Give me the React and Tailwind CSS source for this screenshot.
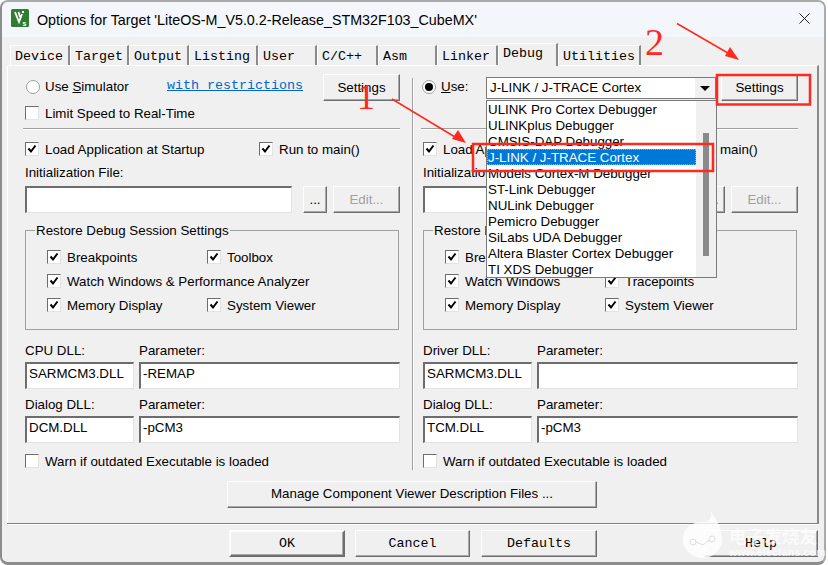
import React from 'react';

const FONT = "font-['Liberation_Sans',Arial,sans-serif]";
const MONO = "font-['Liberation_Mono','Courier_New',monospace]";

const Check = ({ checked, label, className = '' }) => (
  <div className={`flex items-center gap-[6px] h-[16px] ${className}`}>
    <span className="w-[14px] h-[14px] shrink-0 bg-white border-t border-l border-t-[#6d6d6d] border-l-[#6d6d6d] border-r border-b border-r-[#e3e3e3] border-b-[#e3e3e3] flex items-center justify-center">
      {checked && (
        <svg width="10" height="10" viewBox="0 0 10 10">
          <path d="M1.5 4.5 L4 7.5 L8.5 1.5" fill="none" stroke="#000" strokeWidth="2" />
        </svg>
      )}
    </span>
    <span className="whitespace-nowrap pt-[2px]">{label}</span>
  </div>
);

const Radio = ({ selected, children }) => (
  <div className="flex items-center gap-[5px]">
    <span className="w-[14px] h-[14px] rounded-full bg-white border border-[#a0a0a0] flex items-center justify-center">
      {selected && <span className="w-[8px] h-[8px] rounded-full bg-black" />}
    </span>
    <span className="whitespace-nowrap">{children}</span>
  </div>
);

const Btn = ({ className = '', children, disabled }) => (
  <div className={`flex items-center justify-center bg-[#f0f0f0] border border-t-[#fdfdfd] border-l-[#fdfdfd] border-r-[#6e6e6e] border-b-[#6e6e6e] shadow-[inset_-1px_-1px_0_#a8a8a8] ${disabled ? 'text-[#a0a0a0]' : ''} ${className}`}>
    {children}
  </div>
);

const Field = ({ className = '', children }) => (
  <div className={`h-[27px] bg-white border-t-2 border-l-2 border-t-[#6d6d6d] border-l-[#6d6d6d] border-r border-b border-r-[#e3e3e3] border-b-[#e3e3e3] pl-[2px] leading-[20px] whitespace-nowrap ${className}`}>
    {children}
  </div>
);

const Panel = ({ top, limit, restoreRows, dll1Label, dll1, param1, dll2, param2 }) => (
  <div className="w-[375px] flex flex-col">
    <div className="h-[31px]">{top}</div>
    <div className="h-[16px] flex items-center">{limit}</div>
    <div className="mt-[7px] -ml-[2px] w-[377px] h-[2px] border-t border-t-[#a0a0a0] border-b border-b-white" />
    <div className="mt-[11px] flex h-[16px]">
      <Check checked label="Load Application at Startup" className="w-[234px]" />
      <Check checked label="Run to main()" />
    </div>
    <div className="mt-[7px] h-[16px] leading-[18px]">Initialization File:</div>
    <div className="mt-[6px] flex">
      <Field className="w-[267px]" />
      <Btn className="w-[24px] h-[27px] ml-[11px]">...</Btn>
      <Btn disabled className="w-[67px] h-[27px] ml-[6px]">Edit...</Btn>
    </div>
    <div className="mt-[17px] h-[100px] w-[374px] border border-[#a0a0a0] relative pt-[18px] pl-[21px] flex flex-col gap-[8px]">
      <span className="absolute -top-[9px] left-[9px] px-[1px] bg-[#f0f0f0] h-[16px] leading-[18px]">Restore Debug Session Settings</span>
      {restoreRows.map((row, i) => (
        <div key={i} className="flex">
          {row.map((item, j) => (
            <Check key={j} checked label={item} className={row.length > 1 && j === 0 ? 'w-[160px]' : ''} />
          ))}
        </div>
      ))}
    </div>
    <div className="mt-[12px] flex gap-[5px] h-[16px] leading-[18px]">
      <span className="w-[109px]">{dll1Label}</span>
      <span>Parameter:</span>
    </div>
    <div className="mt-[4px] flex gap-[5px]">
      <Field className="w-[109px]">{dll1}</Field>
      <Field className="w-[261px]">{param1}</Field>
    </div>
    <div className="mt-[7px] flex gap-[5px] h-[16px] leading-[18px]">
      <span className="w-[109px]">Dialog DLL:</span>
      <span>Parameter:</span>
    </div>
    <div className="mt-[4px] flex gap-[5px]">
      <Field className="w-[109px]">{dll2}</Field>
      <Field className="w-[261px]">{param2}</Field>
    </div>
    <Check label="Warn if outdated Executable is loaded" className="mt-[10px]" />
  </div>
);

const tabs = [
  ['Device', 'w-[60px]'], ['Target', 'w-[59px]'], ['Output', 'w-[60px]'], ['Listing', 'w-[69px]'],
  ['User', 'w-[59px]'], ['C/C++', 'w-[61px]'], ['Asm', 'w-[59px]'], ['Linker', 'w-[61px]'],
];

const debuggers = [
  'ULINK Pro Cortex Debugger', 'ULINKplus Debugger', 'CMSIS-DAP Debugger', 'J-LINK / J-TRACE Cortex',
  'Models Cortex-M Debugger', 'ST-Link Debugger', 'NULink Debugger', 'Pemicro Debugger',
  'SiLabs UDA Debugger', 'Altera Blaster Cortex Debugger', 'TI XDS Debugger',
];

const Tab = ({ label, className = '', active }) => (
  <div className={`${active ? 'h-[23px] -mb-[1px] bg-[#f0f0f0] relative z-10 border-t border-t-white leading-[20px]' : 'h-[20px] border-t border-t-[#fbfbfb] leading-[22px]'} border-l border-l-white border-r-2 border-r-[#8a8a8a] pl-[4px] ${MONO} text-[13.33px] ${className}`}>
    {label}
  </div>
);

export default function App() {
  return (
    <div className={`${FONT} relative w-[828px] h-[565px] overflow-hidden bg-white text-[13.33px] text-black leading-[18px]`}>
      <div className="w-[826px] h-[565px] rounded-[8px] border-2 border-b-[3px] border-[#8d8d8d] border-t-[#aaa] border-r-[#aaa] bg-[#f0f0f0] overflow-hidden flex flex-col">
        {/* title bar */}
        <div className="h-[35px] shrink-0 bg-[#f3f6fa] flex items-center pl-[9px] pr-[14px]">
          <svg className="-mt-[3px]" width="18" height="18" viewBox="0 0 18 18">
            <rect width="18" height="18" rx="1.5" fill="#2e7d32" />
            <path d="M4 3 L8 13 L11 5 M7.5 3 L9 8 M11 3 L13 3" fill="none" stroke="#fff" strokeWidth="1.8" />
            <text x="11.5" y="16.5" fill="#fff" fontSize="7" fontWeight="bold">s</text>
          </svg>
          <span className="ml-[8px] text-[14.3px]">Options for Target 'LiteOS-M_V5.0.2-Release_STM32F103_CubeMX'</span>
          <svg className="ml-auto -mt-[3px]" width="11" height="11" viewBox="0 0 11 11">
            <path d="M0.5 0.5 L10.5 10.5 M10.5 0.5 L0.5 10.5" stroke="#222" strokeWidth="1" />
          </svg>
        </div>

        {/* tabs */}
        <div className="h-[28px] shrink-0 flex items-end pl-[8px]">
          {tabs.map(([label, w]) => <Tab key={label} label={label} className={w} />)}
          <Tab active label="Debug" className="w-[60px]" />
          <Tab label="Utilities" className="w-[83px]" />
        </div>

        {/* sheet */}
        <div className="flex-1 mx-[5px] border-l border-l-white border-t border-t-white border-r-2 border-r-[#8a8a8a] flex flex-col pl-[17px] pt-[8px]">
          <div className="flex">
            <Panel
              top={
                <div className="flex items-start pl-[1px]">
                  <div className="w-[141px] pt-[4px]"><Radio>Use <u>S</u>imulator</Radio></div>
                  <a className={`${MONO} text-[13.33px] text-[#0066cc] underline pt-[3px] w-[156px]`}>with restrictions</a>
                  <Btn className="w-[77px] h-[27px]">Settings</Btn>
                </div>
              }
              limit={<Check label="Limit Speed to Real-Time" />}
              restoreRows={[['Breakpoints', 'Toolbox'], ['Watch Windows & Performance Analyzer'], ['Memory Display', 'System Viewer']]}
              dll1Label="CPU DLL:"
              dll1="SARMCM3.DLL"
              param1="-REMAP"
              dll2="DCM.DLL"
              param2="-pCM3"
            />
            <div className="ml-[12px] mr-[9px] mt-[4px] w-[2px] h-[392px] border-l border-l-[#a0a0a0] border-r border-r-white" />
            <Panel
              top={
                <div className="flex items-start -ml-[1px]">
                  <div className="w-[64px] pt-[4px]"><Radio selected><u>U</u>se:</Radio></div>
                  <div className="w-[230px] h-[22px] mt-[3px] bg-white border border-[#7a7a7a] flex items-center pl-[3px]">
                    J-LINK / J-TRACE Cortex
                    <span className="ml-auto w-[21px] h-full bg-[#f0f0f0] border-l border-l-white flex items-center justify-center">
                      <span className="w-0 h-0 border-x-[5px] border-x-transparent border-t-[5px] border-t-black" />
                    </span>
                  </div>
                  <Btn className="w-[77px] h-[27px] ml-[5px]">Settings</Btn>
                </div>
              }
              limit={null}
              restoreRows={[['Breakpoints', 'Toolbox'], ['Watch Windows', 'Tracepoints'], ['Memory Display', 'System Viewer']]}
              dll1Label="Driver DLL:"
              dll1="SARMCM3.DLL"
              param1=""
              dll2="TCM.DLL"
              param2="-pCM3"
            />
          </div>
          <Btn className="mt-[11px] ml-[202px] w-[370px] h-[27px] pb-[1px]">Manage Component Viewer Description Files ...</Btn>
        </div>

        {/* footer */}
        <div className="h-[2px] shrink-0 mx-[5px] border-t border-t-[#808080] border-b border-b-white" />
        <div className={`h-[37px] shrink-0 flex items-start pt-[5px] pl-[227px] ${MONO} text-[13.33px]`}>
          <Btn className="w-[116px] h-[27px] border-2 border-t-[#6e6e6e] border-l-[#6e6e6e]">OK</Btn>
          <Btn className="w-[115px] h-[27px] ml-[10px]">Cancel</Btn>
          <Btn className="w-[116px] h-[27px] ml-[11px]">Defaults</Btn>
          <Btn className="w-[114px] h-[27px] ml-[107px]">Help</Btn>
        </div>
      </div>

      {/* open combo list */}
      <div className="absolute left-[486px] top-[100px] w-[231px] h-[178px] bg-white border border-[#7a7a7a] flex">
        <ul className="w-[209px]">
          {debuggers.map((d) => (
            <li key={d} className={`h-[16px] leading-[18px] pl-[1px] whitespace-nowrap ${d.startsWith('J-LINK') ? 'bg-[#0078d7] text-white outline-1 outline-dotted outline-[#e8a040] -outline-offset-1' : ''}`}>{d}</li>
          ))}
        </ul>
        <div className="flex-1 bg-[#f0f0f0] pt-[32px] pl-[7px]">
          <div className="w-[6px] h-[123px] bg-[#8a8a8a]" />
        </div>
      </div>

      {/* red annotations */}
      <svg className="absolute inset-0 pointer-events-none" width="828" height="565">
        <g fill="none" stroke="#ff2a1f">
          <rect x="717" y="75" width="93" height="29.5" strokeWidth="2.5" />
          <rect x="473" y="144" width="240" height="27" strokeWidth="2.5" />
          <path d="M677 23.5 L733 56" strokeWidth="1.5" />
          <path d="M392 99 L460 140" strokeWidth="1.5" />
        </g>
        <path d="M739 60 L725 56 L730 47 Z" fill="#ff2a1f" />
        <path d="M466 143 L452 139 L458 130 Z" fill="#ff2a1f" />
      </svg>
      <span className="absolute left-[357px] top-[79px] font-['Liberation_Serif',serif] text-[36px] leading-[36px] text-[#ff2a1f]">1</span>
      <span className="absolute left-[645px] top-[23px] font-['Liberation_Serif',serif] text-[38px] leading-[38px] text-[#ff2a1f]">2</span>

      {/* watermark */}
      <div className="absolute left-[683px] top-[510px] flex items-start text-white pointer-events-none">
        <svg width="40" height="48" viewBox="0 0 40 48">
          <path d="M28 0 C30 8 39 14 39 29 C39 40 30 48 20 48 C9 48 0 40 0 29 C0 18 10 11 20 12 C26 13 29 8 28 0 Z" fill="#fff" fillOpacity="0.8" />
          <circle cx="10" cy="32" r="3" fill="none" stroke="#ddd" />
          <circle cx="29" cy="29" r="3" fill="none" stroke="#ddd" />
          <path d="M13 32 L20 35 L26 30" fill="none" stroke="#ddd" />
        </svg>
        <div className="ml-[6px] mt-[17px] flex flex-col opacity-70">
          <span className="font-['Noto_Sans_CJK_SC',sans-serif] font-bold text-[17.6px] leading-[18px] whitespace-nowrap">电子发烧友</span>
          <span className="font-bold text-[10.5px] leading-[10px] mt-[2px] tracking-[0.2px] whitespace-nowrap">www.elecfans.com</span>
        </div>
      </div>
    </div>
  );
}
